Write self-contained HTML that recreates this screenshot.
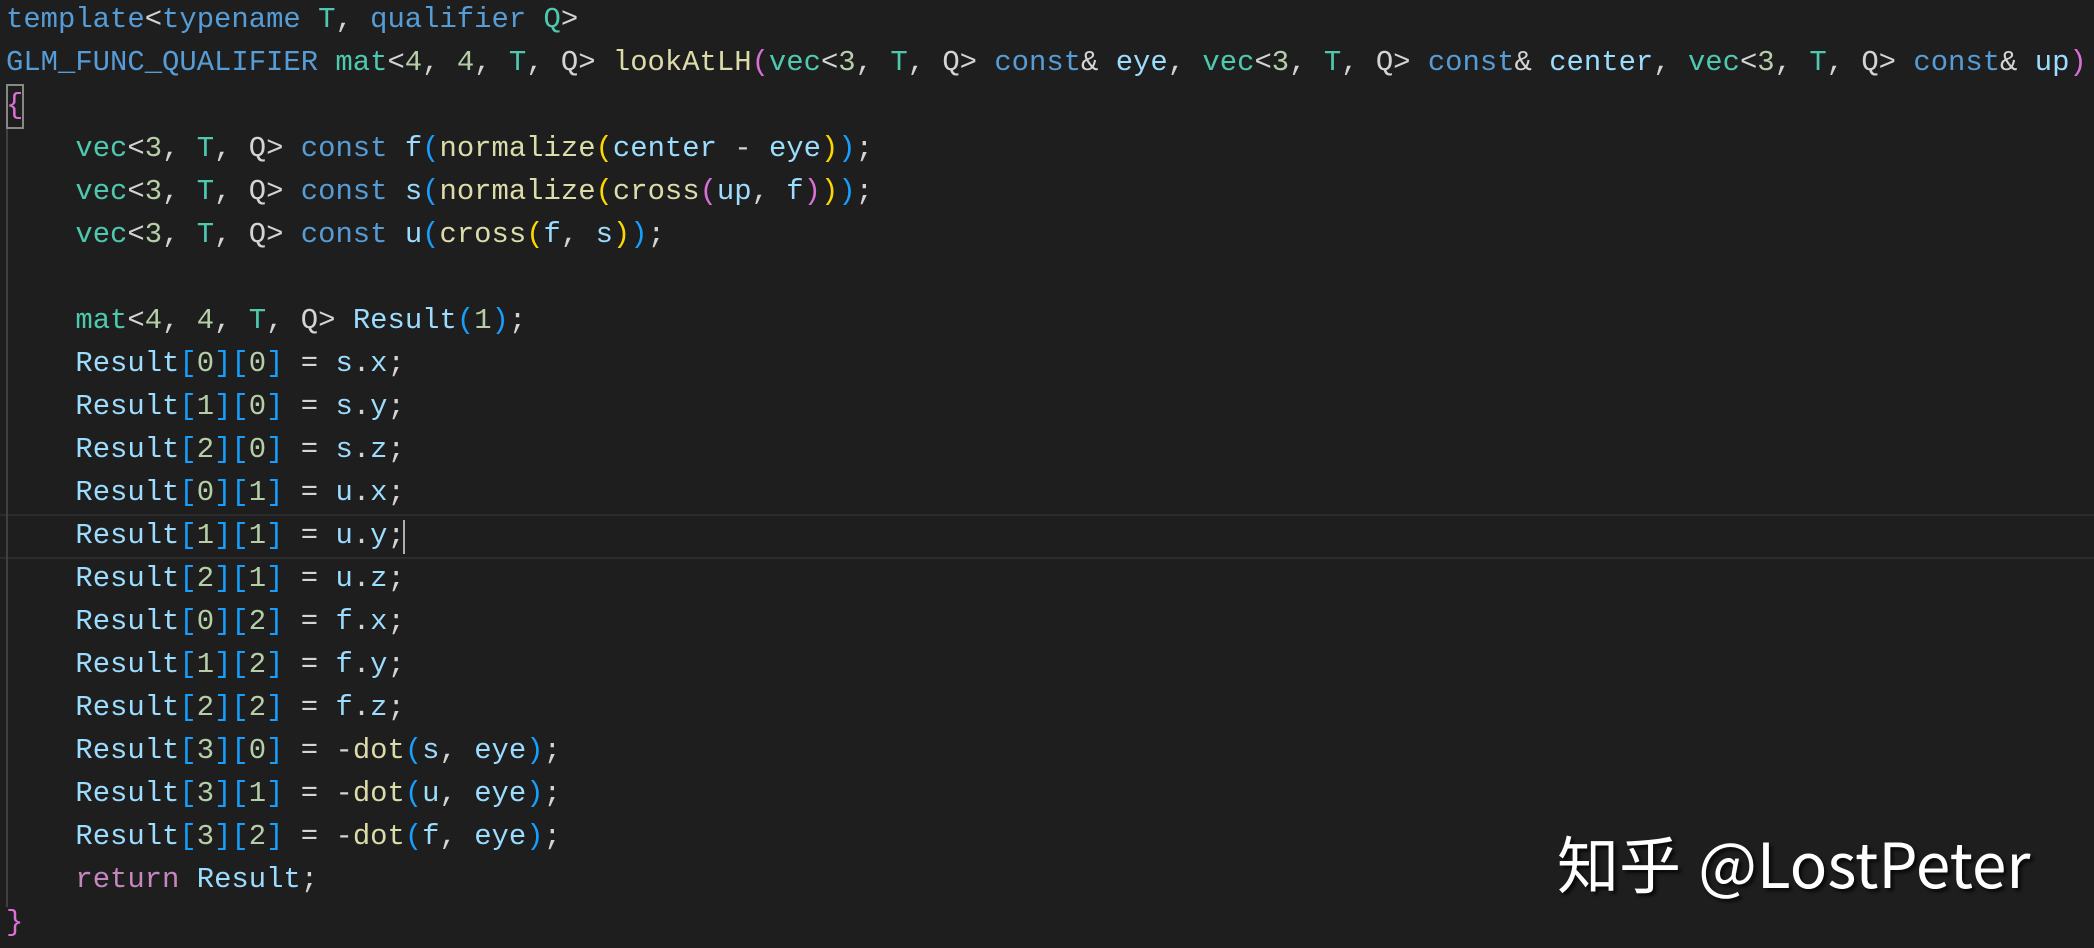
<!DOCTYPE html>
<html><head><meta charset="utf-8"><style>
html,body{margin:0;padding:0;background:#1e1e1e;width:2094px;height:948px;overflow:hidden;}
#code{position:absolute;left:6px;top:-2px;margin:0;font-family:"Liberation Mono",monospace;font-size:28.9px;line-height:43px;color:#d4d4d4;white-space:pre;}
.k{color:#569cd6}.t{color:#4ec9b0}.n{color:#b5cea8}.f{color:#dcdcaa}.v{color:#9cdcfe}.c{color:#c586c0}
.p{color:#da70d6}.b{color:#179fff}.g{color:#ffd700}
#cur{position:absolute;left:0;top:514px;width:2094px;height:41px;border-top:2px solid #2c2c2c;border-bottom:2px solid #2c2c2c;}
#caret{position:absolute;left:403px;top:520px;width:2px;height:34px;background:#aeafad;}
#brace{position:absolute;left:6px;top:84px;width:14px;height:41px;border:2px solid #888;}
#guide{position:absolute;left:6px;top:127px;width:2px;height:780px;background:#404040;}
#wm{position:absolute;left:1557px;top:816px;font-family:"Liberation Sans","Noto Sans CJK SC",sans-serif;font-size:62px;line-height:90px;color:#fff;text-shadow:3px 3px 3px rgba(0,0,0,.7);white-space:nowrap;}
#wm .cn{font-family:"Noto Sans CJK SC",sans-serif;}
#wm .en{font-family:"Noto Sans CJK SC","Liberation Sans",sans-serif;}
</style></head><body>
<div id="cur"></div>
<div id="guide"></div>
<div id="brace"></div>
<pre id="code"><span class="k">template</span>&lt;<span class="k">typename</span> <span class="t">T</span>, <span class="k">qualifier</span> <span class="t">Q</span>&gt;
<span class="k">GLM_FUNC_QUALIFIER</span> <span class="t">mat</span>&lt;<span class="n">4</span>, <span class="n">4</span>, <span class="t">T</span>, Q&gt; <span class="f">lookAtLH</span><span class="p">(</span><span class="t">vec</span>&lt;<span class="n">3</span>, <span class="t">T</span>, Q&gt; <span class="k">const</span>&amp; <span class="v">eye</span>, <span class="t">vec</span>&lt;<span class="n">3</span>, <span class="t">T</span>, Q&gt; <span class="k">const</span>&amp; <span class="v">center</span>, <span class="t">vec</span>&lt;<span class="n">3</span>, <span class="t">T</span>, Q&gt; <span class="k">const</span>&amp; <span class="v">up</span><span class="p">)</span>
<span class="p">{</span>
    <span class="t">vec</span>&lt;<span class="n">3</span>, <span class="t">T</span>, Q&gt; <span class="k">const</span> <span class="v">f</span><span class="b">(</span><span class="f">normalize</span><span class="g">(</span><span class="v">center</span> - <span class="v">eye</span><span class="g">)</span><span class="b">)</span>;
    <span class="t">vec</span>&lt;<span class="n">3</span>, <span class="t">T</span>, Q&gt; <span class="k">const</span> <span class="v">s</span><span class="b">(</span><span class="f">normalize</span><span class="g">(</span><span class="f">cross</span><span class="p">(</span><span class="v">up</span>, <span class="v">f</span><span class="p">)</span><span class="g">)</span><span class="b">)</span>;
    <span class="t">vec</span>&lt;<span class="n">3</span>, <span class="t">T</span>, Q&gt; <span class="k">const</span> <span class="v">u</span><span class="b">(</span><span class="f">cross</span><span class="g">(</span><span class="v">f</span>, <span class="v">s</span><span class="g">)</span><span class="b">)</span>;

    <span class="t">mat</span>&lt;<span class="n">4</span>, <span class="n">4</span>, <span class="t">T</span>, Q&gt; <span class="v">Result</span><span class="b">(</span><span class="n">1</span><span class="b">)</span>;
    <span class="v">Result</span><span class="b">[</span><span class="n">0</span><span class="b">][</span><span class="n">0</span><span class="b">]</span> = <span class="v">s</span>.<span class="v">x</span>;
    <span class="v">Result</span><span class="b">[</span><span class="n">1</span><span class="b">][</span><span class="n">0</span><span class="b">]</span> = <span class="v">s</span>.<span class="v">y</span>;
    <span class="v">Result</span><span class="b">[</span><span class="n">2</span><span class="b">][</span><span class="n">0</span><span class="b">]</span> = <span class="v">s</span>.<span class="v">z</span>;
    <span class="v">Result</span><span class="b">[</span><span class="n">0</span><span class="b">][</span><span class="n">1</span><span class="b">]</span> = <span class="v">u</span>.<span class="v">x</span>;
    <span class="v">Result</span><span class="b">[</span><span class="n">1</span><span class="b">][</span><span class="n">1</span><span class="b">]</span> = <span class="v">u</span>.<span class="v">y</span>;
    <span class="v">Result</span><span class="b">[</span><span class="n">2</span><span class="b">][</span><span class="n">1</span><span class="b">]</span> = <span class="v">u</span>.<span class="v">z</span>;
    <span class="v">Result</span><span class="b">[</span><span class="n">0</span><span class="b">][</span><span class="n">2</span><span class="b">]</span> = <span class="v">f</span>.<span class="v">x</span>;
    <span class="v">Result</span><span class="b">[</span><span class="n">1</span><span class="b">][</span><span class="n">2</span><span class="b">]</span> = <span class="v">f</span>.<span class="v">y</span>;
    <span class="v">Result</span><span class="b">[</span><span class="n">2</span><span class="b">][</span><span class="n">2</span><span class="b">]</span> = <span class="v">f</span>.<span class="v">z</span>;
    <span class="v">Result</span><span class="b">[</span><span class="n">3</span><span class="b">][</span><span class="n">0</span><span class="b">]</span> = -<span class="f">dot</span><span class="b">(</span><span class="v">s</span>, <span class="v">eye</span><span class="b">)</span>;
    <span class="v">Result</span><span class="b">[</span><span class="n">3</span><span class="b">][</span><span class="n">1</span><span class="b">]</span> = -<span class="f">dot</span><span class="b">(</span><span class="v">u</span>, <span class="v">eye</span><span class="b">)</span>;
    <span class="v">Result</span><span class="b">[</span><span class="n">3</span><span class="b">][</span><span class="n">2</span><span class="b">]</span> = -<span class="f">dot</span><span class="b">(</span><span class="v">f</span>, <span class="v">eye</span><span class="b">)</span>;
    <span class="c">return</span> <span class="v">Result</span>;
<span class="p">}</span></pre>
<div id="caret"></div>
<div id="wm"><span class="cn">知乎</span> <span class="en">@LostPeter</span></div>
</body></html>
